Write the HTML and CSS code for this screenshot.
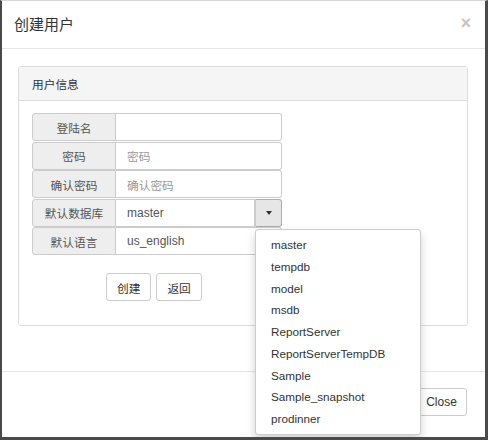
FILE: index.html
```html
<!DOCTYPE html>
<html>
<head>
<meta charset="utf-8">
<link rel="stylesheet" href="styles.css">
</head>
<body>
<div class="frame">
  <div class="modal">
    <div class="modal-header">
      <h4 class="modal-title">创建用户</h4>
      <span class="close">×</span>
    </div>
    <div class="modal-body">
      <div class="panel">
        <div class="panel-heading">用户信息</div>
        <div class="panel-body">
          <div class="input-group">
            <span class="addon">登陆名</span>
            <span class="field"></span>
          </div>
          <div class="input-group">
            <span class="addon">密码</span>
            <span class="field placeholder">密码</span>
          </div>
          <div class="input-group">
            <span class="addon">确认密码</span>
            <span class="field placeholder">确认密码</span>
          </div>
          <div class="input-group">
            <span class="addon">默认数据库</span>
            <span class="field with-btn">master</span>
            <span class="caret-btn"><span class="caret"></span></span>
          </div>
          <div class="input-group">
            <span class="addon">默认语言</span>
            <span class="field">us_english</span>
          </div>
          <div class="actions">
            <span class="btn">创建</span>
            <span class="btn">返回</span>
          </div>
        </div>
      </div>
    </div>
    <div class="modal-footer">
      <span class="btn">Close</span>
    </div>
    <ul class="dropdown-menu">
      <li>master</li>
      <li>tempdb</li>
      <li>model</li>
      <li>msdb</li>
      <li>ReportServer</li>
      <li>ReportServerTempDB</li>
      <li>Sample</li>
      <li>Sample_snapshot</li>
      <li>prodinner</li>
    </ul>
  </div>
</div>
</body>
</html>
```
FILE: styles.css
```css
* { box-sizing: border-box; }
html, body { margin: 0; padding: 0; background: #fff; }
body {
  font-family: "Liberation Sans", Arial, "Noto Sans CJK SC", sans-serif;
  font-size: 11.7px;
  color: #333;
}
.frame {
  width: 488px;
  height: 440px;
  border-left: 2px solid #4a4a4a;
  border-right: 3px solid #4a4a4a;
  border-bottom: 3px solid #4a4a4a;
  border-top: 1px solid #d8d8d8;
  overflow: hidden;
  position: relative;
}
.modal {
  position: relative;
  height: 100%;
  background: #fff;
}
.modal-header {
  height: 48px;
  border-bottom: 1px solid #e5e5e5;
  display: flex;
  align-items: center;
  justify-content: space-between;
  padding: 0 14px 2px 12px;
}
.modal-title {
  margin: 0;
  font-family: "Noto Sans CJK SC", sans-serif;
  font-weight: normal;
  font-size: 15px;
  color: #333;
}
.close {
  font-family: "Liberation Sans", Arial, sans-serif;
  font-size: 17.6px;
  font-weight: bold;
  color: #c4c4c4;
  line-height: 1;
}
.modal-body {
  padding: 17px 16px 0 16px;
  height: 323px;
  border-bottom: 1px solid #e5e5e5;
}
.panel {
  width: 450px;
  border: 1px solid #ddd;
  border-radius: 3px;
  background: #fff;
}
.panel-heading {
  height: 34px;
  background: #f5f5f5;
  border-bottom: 1px solid #ddd;
  padding: 0 13px;
  display: flex;
  align-items: center;
  font-family: "Noto Sans CJK SC", sans-serif;
  font-size: 11.7px;
  color: #333;
}
.panel-body {
  padding: 12px 13px 24px 13px;
}
.input-group {
  display: flex;
  width: 250px;
  height: 28px;
  margin-bottom: 0.5px;
}
.addon {
  width: 84px;
  flex: none;
  background: #eee;
  border: 1px solid #ccc;
  border-radius: 3px 0 0 3px;
  display: flex;
  align-items: center;
  justify-content: center;
  font-family: "Noto Sans CJK SC", sans-serif;
  font-size: 11.7px;
  color: #555;
}
.field {
  flex: 1;
  border: 1px solid #ccc;
  border-left: none;
  border-radius: 0 3px 3px 0;
  display: flex;
  align-items: center;
  padding-left: 11px;
  font-size: 12px;
  color: #555;
  font-family: "Liberation Sans", Arial, "Noto Sans CJK SC", sans-serif;
}
.field.placeholder {
  color: #999;
  font-family: "Noto Sans CJK SC", sans-serif;
  font-size: 11.7px;
}
.field.with-btn { border-radius: 0; }
.caret-btn {
  width: 27px;
  flex: none;
  background: #e6e6e6;
  border: 1px solid #adadad;
  border-left: 1px solid #ccc;
  border-radius: 0 3px 3px 0;
  display: flex;
  align-items: center;
  justify-content: center;
}
.caret {
  width: 0;
  height: 0;
  border-top: 4px solid #333;
  border-left: 3.5px solid transparent;
  border-right: 3.5px solid transparent;
}
.actions {
  display: flex;
  gap: 5px;
  padding-left: 74px;
  margin-top: 18px;
}
.btn {
  display: inline-flex;
  align-items: center;
  justify-content: center;
  height: 28px;
  padding: 0 10px;
  border: 1px solid #ccc;
  border-radius: 3px;
  background: #fff;
  font-family: "Noto Sans CJK SC", sans-serif;
  font-size: 11.7px;
  color: #333;
}
.modal-footer {
  display: flex;
  justify-content: flex-end;
  padding: 16px 18px 0 0;
}
.modal-footer .btn {
  font-family: "Liberation Sans", Arial, sans-serif;
  font-size: 12px;
  width: 51px;
  padding: 0;
}
.dropdown-menu {
  position: absolute;
  left: 253px;
  top: 228px;
  width: 166px;
  margin: 0;
  padding: 4px 0;
  list-style: none;
  background: #fff;
  border: 1px solid #ccc;
  border-radius: 3px;
  box-shadow: 0 5px 10px rgba(0,0,0,0.18);
}
.dropdown-menu li {
  height: 21.75px;
  line-height: 21.75px;
  padding: 0 15px;
  font-size: 11.7px;
  color: #333;
  white-space: nowrap;
}
```
